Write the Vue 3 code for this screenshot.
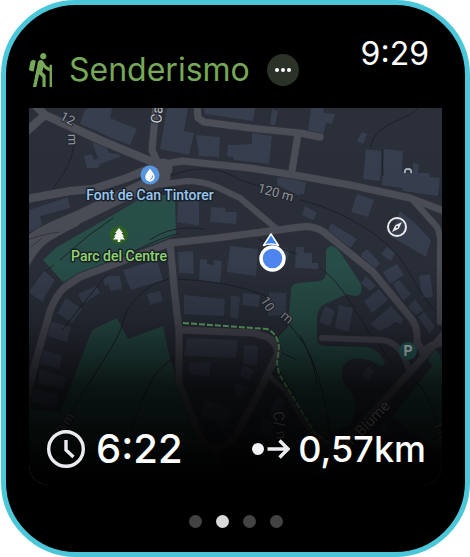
<script setup>
import { ref } from 'vue'

const activity = 'Senderismo'
const clock = '9:29'
const elapsed = '6:22'
const distance = '0,57km'
const pages = ['Control', 'Mapa', 'Datos', 'Música']
const current = ref(1)

const parks = [
  'M43 260L57 247L113 215L140 199L175 193L176 235L120 257L63 282Z',
  'M92 330L117 318L128 339L163 326L168 350L180 393L200 440L232 485H29V409L60 413Z',
  'M291 290Q291 283 300 283L320 281Q326 279 326 272V250Q331 242 338 250L342 255L361 284Q364 296 354 296L347 294L323 305Q317 310 317 320V338Q317 346 325 346L367 347Q380 350 385 363C382 370 376 362 368 360C350 355 341 362 342 376C343 390 356 390 355 408L352 423L325 437L315 430L278 367L279 336L288 327Z',
  'M438 358L393 417L435 450L442 451V361Z',
  'M236 485L258 463L330 446L370 485Z',
  'M442 358L432 366L426 356L435 349Z'
]

const contours = [
  'M74 142C72 165 62 175 53 189',
  'M170 176C190 168 215 164 240 180L262 187M300 200C335 208 370 228 390 247S420 300 440 315',
  'M418 108C405 122 377 122 371 145V149',
  'M382 149L383 176M439 195L442 198',
  'M113 218L88 236L60 260M46 271L54 265',
  'M150 240C165 230 180 226 205 229M130 253C150 244 160 238 180 233',
  'M170 279C140 285 125 310 123 322S110 350 70 414',
  'M170 279C210 280 240 285 268 297M287 321L305 345C318 370 325 395 331 440',
  'M320 268C345 285 355 315 375 340L392 363',
  'M178 356C150 370 145 395 131 430',
  'M258 239Q275 247 297 254M107 274L62 330M300 335Q314 360 317 385',
  'M411 377C424 387 432 405 436 420M280 352L297 360'
]

const roads = [
  { d: 'M36 106L45 115L100 140L155 163M45 115L27 131', w: 8 },
  { d: 'M156 106L152 150L158 164', w: 7 },
  { d: 'M27 199L70 191L93 189L127 178L158 165', w: 8 },
  { d: 'M20 252C35 232 65 224 87 213L120 197L164 177', w: 13 },
  { d: 'M25 262C38 238 48 235 75 221', w: 11 },
  { d: 'M160 171L170 163L182 161L250 168L300 176L350 185L410 198L444 211', w: 7 },
  { d: 'M412 199L437 227Q441 235 440 250V322', w: 6 },
  { d: 'M157 185L187 181Q202 181 217 187L240 198L278 230', w: 6 },
  { d: 'M27 395L38 353L50 311Q56 295 65 287L80 277L120 262L170 243L217 238L300 227Q317 224 330 237L373 272L410 317Q417 325 417 335V343L425 353', w: 7 },
  { d: 'M170 243L175 297L179 330V383L200 437Q212 457 233 440L255 400L278 353Q276 341 267 337L254 333L180 330', w: 7 },
  { d: 'M216 453L228 485M268 375L285 390L308 427L340 460', w: 5 },
  { d: 'M197 106L198 118L204 122L250 128L300 133L320 137', w: 7 },
  { d: 'M298 134L292 171', w: 7 },
  { d: 'M322 338L380 340Q393 340 402 353L410 371', w: 6 },
  { d: 'M444 334L382 403L312 475M422 352Q433 342 444 343', w: 7 }
]

const buildings = [
  'M88 108H112L110 118L137 129L130 145L111 138L95 130L80 124L84 112Z',
  'M92 142L103 141L109 153L119 154L120 157L100 164L98 168L87 168L84 156L92 154L94 160L98 158Z',
  'M29 210L68 197L70 208L40 216L43 228L29 232Z',
  'M167 108H188L184 131L194 133L189 155L160 149Z',
  'M204 108H255L253 121L205 114Z',
  'M272 109L278 111L275 126L270 124Z',
  'M196 135L220 137L219 157L199 156Z',
  'M234 145L252 144V133L272 136L269 164L234 160L233 157L227 156L228 145Z',
  'M311 108H323L324 113L335 114L332 124L326 123L323 135L308 131Z',
  'M362 132L367 134L363 144L357 141Z',
  'M366 149L382 151L380 181L363 179Z',
  'M384 149L403 151L402 172L413 173V163L419 164L418 173L429 173L430 177L440 178L438 196L403 191L402 188L382 185Z',
  'M277 178L300 177V196L277 185Z',
  'M300 181L306 182L304 194H300Z',
  'M357 194L374 200L368 217L351 212Z',
  'M305 206L317 213L313 220L302 215Z',
  'M178 202L199 200V226L177 222Z',
  'M211 207L225 208L226 212L237 212L236 224L210 222Z',
  'M29 220L39 218L41 227L29 230Z',
  'M44 271L55 280L45 296L43 302L35 297L29 292Z',
  'M78 294L96 286L100 293L83 304Z',
  'M66 298L82 309L72 323L57 313Z',
  'M50 321L71 327L67 342L47 336Z',
  'M43 350L62 355L60 369L38 363Z',
  'M39 369L67 378L63 389L39 384Z',
  'M31 387L58 395L56 408L29 401Z',
  'M110 276L120 276L122 289L111 291L108 284L105 286L103 279Z',
  'M123 270L157 260L163 280L134 289L131 290L127 281Z',
  'M147 294L160 291L163 301L150 305Z',
  'M178 252L193 251L194 274L179 273Z',
  'M200 259L207 260V264L213 265L214 260L222 261L220 283L199 281Z',
  'M230 246L258 249L256 276L227 272Z',
  'M283 247L289 250L288 259L282 257Z',
  'M296 247H304V253H312V263H318V269L295 268Z',
  'M184 295L225 299L224 316L184 314Z',
  'M231 295L240 297L238 319L230 317Z',
  'M243 293L260 295L259 307L242 305Z',
  'M269 292L286 293V315L268 316Z',
  'M187 338L238 340L236 358L184 356Z',
  'M244 345L258 346L257 366L243 364Z',
  'M189 363L210 362V376L190 375Z',
  'M206 400L233 411L228 423L223 431L218 422L200 416Z',
  'M243 365L254 370L249 380L240 375Z',
  'M235 383L248 388L243 399L235 397Z',
  'M277 396L285 401L277 425L269 414Z',
  'M263 418L273 422V438L259 435Z',
  'M331 223L357 239L350 248L328 231Z',
  'M362 253L367 249L380 263L375 269L361 258Z',
  'M387 247L395 253L391 261L381 254Z',
  'M400 211L415 223L431 240L426 257L390 236Z',
  'M383 272L397 264L404 275L390 284Z',
  'M366 276L376 286L370 291L361 283Z',
  'M393 284L399 280L411 294L403 301Z',
  'M364 301L379 289L388 300L372 313Z',
  'M370 324L391 306L403 319L401 324L395 322L389 327L379 331Z',
  'M419 276L430 274L433 297L422 298Z',
  'M408 307L415 299L423 310L416 315Z',
  'M418 317L424 312L435 326L430 334Z',
  'M325 306L335 311L330 326L319 322Z',
  'M339 305L353 308L349 332L335 328Z',
  'M368 366L374 372L369 380L362 374Z',
  'M377 428L385 424L389 432L380 438Z'
]
</script>

<template>
  <main class="watch">
    <header class="top">
      <div class="activity">
        <svg class="hiker" viewBox="4.5 1.5 14.5 21.5" aria-hidden="true">
          <path d="M13.5 5.5c1.1 0 2-.9 2-2s-.9-2-2-2-2 .9-2 2 .9 2 2 2zM17.5 10.78c-1.23-.37-2.22-1.17-2.8-2.18l-1-1.6c-.41-.65-1.11-1-1.84-1-.78 0-1.59.5-1.78 1.44S7 23 7 23h2.1l1.8-8 2.1 2v6h2v-7.5l-2.1-2 .6-3c1 1.15 2.41 2.01 4 2.34V23H19V9h-1.5v1.78zM7.43 13.13l-2.12-.41c-.54-.11-.9-.63-.79-1.17l.76-3.93c.21-1.08 1.26-1.79 2.34-1.58l1.16.23-1.35 6.86z" />
        </svg>
        <h1 class="title">{{ activity }}</h1>
        <button class="more" type="button" aria-label="Más opciones">
          <svg viewBox="0 0 32 32" aria-hidden="true">
            <circle cx="10" cy="16" r="2" /><circle cx="16" cy="16" r="2" /><circle cx="22" cy="16" r="2" />
          </svg>
        </button>
      </div>
      <time class="clock">{{ clock }}</time>
    </header>

    <section class="map-area">
      <svg class="map" viewBox="29 108 413 377">
        <defs>
          <linearGradient id="fade" x1="0" y1="0" x2="0" y2="1">
            <stop offset="0" stop-color="#000" stop-opacity="0" />
            <stop offset="0.42" stop-color="#000" stop-opacity="0.04" />
            <stop offset="0.56" stop-color="#000" stop-opacity="0.24" />
            <stop offset="0.64" stop-color="#000" stop-opacity="0.45" />
            <stop offset="0.74" stop-color="#000" stop-opacity="0.75" />
            <stop offset="0.86" stop-color="#000" stop-opacity="0.88" />
            <stop offset="0.94" stop-color="#000" stop-opacity="0.97" />
            <stop offset="0.98" stop-color="#000" />
          </linearGradient>
        </defs>
        <rect class="ground" x="29" y="108" width="413" height="377" />
        <path v-for="d in parks" :key="d" class="park" :d="d" />
        <path v-for="d in buildings" :key="d" class="building" :d="d" />
        <path v-for="d in contours" :key="d" class="contour" :d="d" />
        <g class="edges">
          <path v-for="r in roads" :key="r.d" :d="r.d" :stroke-width="r.w + 2" />
          <circle cx="163" cy="168" r="6" stroke-width="9" />
        </g>
        <g class="roads">
          <path v-for="r in roads" :key="r.d" :d="r.d" :stroke-width="r.w" />
          <circle cx="163" cy="168" r="6" stroke-width="7" />
        </g>
        <path class="gap" d="M29 239L47 234L60 232M31 247L42 238M100 218L160 187" />
        <path class="trail" d="M183 323L267 329Q277 333 279 346L277 363L279 374L315 433L332 445" />

        <g class="heights">
          <text transform="translate(257 192) rotate(15)">120 m</text>
          <text transform="translate(59 119) rotate(28)">12</text>
          <text transform="translate(68 134) rotate(88)">m</text>
          <text transform="translate(260 300) rotate(58)">10</text>
          <text transform="translate(280 317) rotate(40)">m</text>
          <text transform="translate(59 441) rotate(-57)">90 m</text>
          <text transform="translate(432 424) rotate(66)">110</text>
        </g>
        <path class="gate" d="M405 173Q404 169 408 169Q412 169 411 173" />
        <g class="streets">
          <text transform="translate(161 124) rotate(-84)">Ca</text>
          <text transform="translate(318 482) rotate(-46)">Joaquim Blume</text>
          <text transform="translate(273 412) rotate(82)">C/ n</text>
        </g>

        <circle cx="150" cy="175" r="9.5" fill="#5798e4" />
        <path d="M150 168.5C147.500 172 145.300 174.300 145.300 177A4.700 4.700 0 0 0 154.700 177C154.700 174.300 152.500 172 150 168.500Z" fill="#fff" />
        <path d="M152.500 175.500Q153 178.500 150.300 179.600" fill="none" stroke="#5798e4" />
        <text class="place water" x="150" y="200">Font de Can Tintorer</text>

        <circle cx="119" cy="235" r="9" fill="#2f6420" />
        <path d="M119 228L123 233H121.500L124 236.500H122.500L125 239.500H120.300V242H117.700V239.500H113L115.500 236.500H114L116.500 233H115Z" fill="#fff" />
        <text class="place green" x="119" y="261">Parc del Centre</text>

        <circle cx="408" cy="351" r="9" fill="#2d6967" />
        <text class="parking" x="408" y="356">P</text>

        <rect x="28" y="108" width="415" height="378" fill="url(#fade)" />

        <path d="M271 234L278.500 245.500Q271 242.500 263.500 245.500Z" fill="#3d82f5" stroke="#fff" stroke-width="1.500" stroke-linejoin="round" />
        <circle cx="272.500" cy="258.500" r="11.500" fill="#4e84ee" stroke="#fff" stroke-width="3.500" />
      </svg>

      <button class="compass" type="button" aria-label="Brújula">
        <svg viewBox="0 0 22 22" aria-hidden="true">
          <circle cx="11" cy="11" r="9" />
          <path d="M16 6L12.700 12.700L6 16L9.300 9.300Z" />
          <circle class="pin" cx="11" cy="11" r="1" />
        </svg>
      </button>

      <div class="stats">
        <div class="stat elapsed">
          <svg class="icon" viewBox="0 0 38 38" aria-hidden="true">
            <circle cx="19" cy="19" r="17.300" />
            <path d="M19 10V20L26.500 27" />
          </svg>
          <span>{{ elapsed }}</span>
        </div>
        <div class="stat distance">
          <svg class="icon" viewBox="0 0 38 38" aria-hidden="true">
            <circle class="dot" cx="6" cy="19" r="6" />
            <path d="M15.500 19H36M27.500 10.500L36 19L27.500 27.500" />
          </svg>
          <span>{{ distance }}</span>
        </div>
      </div>
    </section>

    <nav class="pager" aria-label="Páginas">
      <button
        v-for="(page, i) in pages"
        :key="page"
        type="button"
        class="page"
        :class="{ on: i === current }"
        :aria-label="page"
        @click="current = i"
      ></button>
    </nav>
  </main>
</template>

<style>
body {
  background: #fff;
}
</style>

<style scoped>
.watch {
  box-sizing: border-box;
  min-height: 100vh;
  margin-left: 1px;
  padding: 0 23px;
  border: 5px solid #4cc7d9;
  border-radius: 75px;
  background: #000;
  color: #fff;
  font-family: Inter, "Liberation Sans", sans-serif;
}

button {
  padding: 0;
  border: 0;
  background: none;
  cursor: pointer;
}

svg {
  display: block;
}

.top {
  display: flex;
  justify-content: space-between;
  align-items: flex-start;
  padding: 33px 13px 22px 0;
}

.activity {
  display: flex;
  align-items: center;
  gap: 17px;
  margin-top: 16px;
  height: 32px;
}

.hiker {
  width: 23px;
  height: 34px;
  fill: #76a858;
}

.title {
  margin: 0;
  color: #76a858;
  font-size: 32px;
  font-weight: 400;
  line-height: 32px;
}

.more {
  width: 32px;
  height: 32px;
  border-radius: 50%;
  background: #2b3329;
}

.more svg {
  fill: #fff;
}

.clock {
  font-size: 32px;
  line-height: 32px;
}

.map-area {
  position: relative;
  display: grid;
}

.map {
  grid-area: 1 / 1;
  width: 100%;
  border-radius: 0 0 20px 20px;
}

.ground {
  fill: #2a2f3a;
}

.park {
  fill: #29504a;
}

.building {
  fill: #373e4e;
}

.contour {
  fill: none;
  stroke: #1d222b;
}

.edges,
.roads {
  fill: none;
  stroke-linecap: round;
  stroke-linejoin: round;
}

.edges {
  stroke: #30333c;
}

.roads {
  stroke: #4b4d57;
}

.gap {
  fill: none;
  stroke: #343740;
}

.gate {
  fill: none;
  stroke: #a9b4c4;
  stroke-width: 2;
}

.trail {
  fill: none;
  stroke: #69b56f;
  stroke-width: 2;
  stroke-dasharray: 6 2;
}

.heights,
.streets {
  stroke: #23272f;
  stroke-width: 2;
  paint-order: stroke;
  font-family: Roboto, sans-serif;
}

.heights {
  fill: #93969e;
  font-size: 13px;
}

.streets {
  fill: #c4c5c9;
  font-size: 15px;
}

.place {
  stroke: #1b222b;
  stroke-width: 3;
  stroke-linejoin: round;
  paint-order: stroke;
  text-anchor: middle;
  font-family: Roboto, sans-serif;
  font-size: 14px;
  font-weight: 500;
}

.water {
  fill: #9ccbf2;
}

.green {
  fill: #95dc72;
}

.parking {
  fill: #e4eeee;
  text-anchor: middle;
  font-family: Roboto, sans-serif;
  font-size: 14px;
  font-weight: 700;
}

.compass {
  position: absolute;
  left: 89%;
  top: 31.5%;
  width: 22px;
  height: 22px;
  transform: translate(-50%, -50%);
}

.compass circle {
  fill: none;
  stroke: #e9eaec;
  stroke-width: 2;
}

.compass path {
  fill: #e9eaec;
}

.compass .pin {
  fill: #2a2f3a;
  stroke: none;
}

.stats {
  grid-area: 1 / 1;
  align-self: end;
  display: flex;
  justify-content: space-between;
  align-items: center;
  padding: 0 16px 16px 18px;
}

.stat {
  display: flex;
  align-items: center;
  line-height: 40px;
  font-weight: 500;
}

.elapsed {
  gap: 11px;
  font-size: 40px;
}

.distance {
  gap: 8px;
  font-size: 36px;
}

.icon {
  width: 38px;
  height: 38px;
  fill: none;
  stroke: #ececf0;
  stroke-width: 3.400;
}

.icon .dot {
  fill: #f4f4f6;
  stroke: none;
}

.pager {
  display: flex;
  justify-content: center;
  gap: 14px;
  padding: 30px 0 24px;
}

.page {
  width: 13px;
  height: 13px;
  border-radius: 50%;
  background: #434343;
}

.page.on {
  background: #d9d9d9;
}
</style>
